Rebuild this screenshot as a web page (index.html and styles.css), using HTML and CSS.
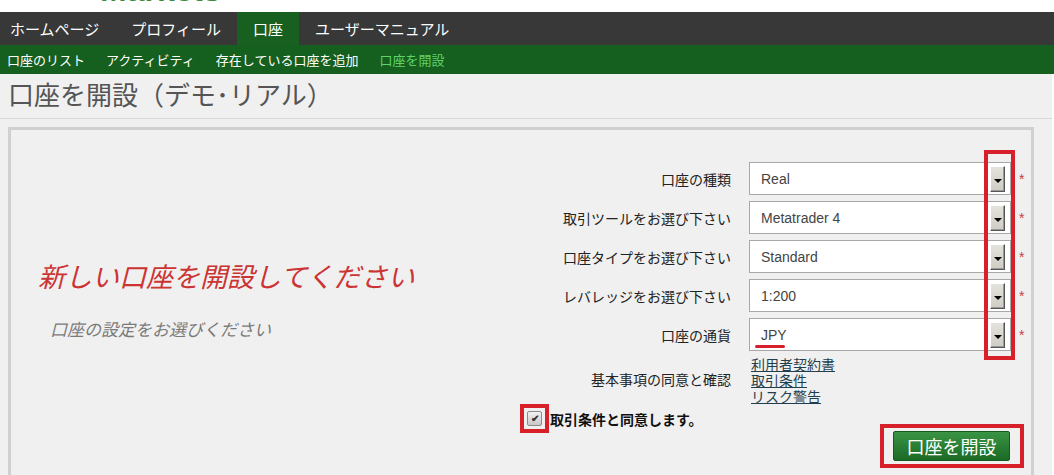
FILE: index.html
```html
<!DOCTYPE html>
<html lang="ja">

<head>
    <meta charset="UTF-8">
    <meta name="viewport" content="width=device-width, initial-scale=1.0">
    <title>口座を開設</title>
    <link rel="stylesheet" href="styles.css">
</head>

<body>

    <div class="top-bar">
        <span class="logo">Markets</span>
    </div>

    <nav class="main-nav">
        <a href="#">ホームページ</a>
        <a href="#">プロフィール</a>
        <a href="#" class="active">口座</a>
        <a href="#">ユーザーマニュアル</a>
    </nav>

    <nav class="sub-nav">
        <a href="#">口座のリスト</a>
        <a href="#">アクティビティ</a>
        <a href="#">存在している口座を追加</a>
        <a href="#" class="active">口座を開設</a>
    </nav>

    <div class="page">
        <h1 class="page-title">口座を開設（デモ･リアル）</h1>

        <div class="panel">
            <div class="intro">
                <h2>新しい口座を開設してください</h2>
                <p>口座の設定をお選びください</p>
            </div>

            <form class="account-form">
                <label class="form-label">口座の種類</label>
                <div class="field">
                    <div class="select"><span>Real</span><span class="drop"></span></div>
                    <span class="req">*</span>
                </div>

                <label class="form-label">取引ツールをお選び下さい</label>
                <div class="field">
                    <div class="select"><span>Metatrader 4</span><span class="drop"></span></div>
                    <span class="req">*</span>
                </div>

                <label class="form-label">口座タイプをお選び下さい</label>
                <div class="field">
                    <div class="select"><span>Standard</span><span class="drop"></span></div>
                    <span class="req">*</span>
                </div>

                <label class="form-label">レバレッジをお選び下さい</label>
                <div class="field">
                    <div class="select"><span>1:200</span><span class="drop"></span></div>
                    <span class="req">*</span>
                </div>

                <label class="form-label">口座の通貨</label>
                <div class="field">
                    <div class="select"><span class="underlined">JPY</span><span class="drop"></span></div>
                    <span class="req">*</span>
                </div>

                <label class="form-label label-top">基本事項の同意と確認</label>
                <div class="doc-links">
                    <a href="#">利用者契約書</a>
                    <a href="#">取引条件</a>
                    <a href="#">リスク警告</a>
                </div>

                <div class="agree">
                    <span class="checkbox-mark"><span class="checkbox">&#10004;</span></span>
                    <span>取引条件と同意します。</span>
                </div>

                <div class="submit-row">
                    <span class="submit-mark">
                        <button type="button" class="submit-button">口座を開設</button>
                    </span>
                </div>

                <!-- red marker round the dropdown buttons -->
                <div class="drops-mark"></div>
            </form>
        </div>
    </div>

</body>

</html>
```

FILE: styles.css
```css
body {
    margin: 0;
    padding: 0;
    background-color: #fff;
    font-family: 'Liberation Sans', 'Noto Sans CJK JP', sans-serif;
    color: #222;
}

a {
    text-decoration: none;
}

.top-bar {
    height: 12px;
    overflow: hidden;
    padding-left: 100px;
}

.logo {
    display: block;
    margin-top: -26px;
    font-size: 32px;
    line-height: 32px;
    font-weight: 700;
    color: #3b8a3e;
}

.main-nav {
    display: flex;
    height: 33px;
    background-color: #383838;
}

.main-nav a {
    display: flex;
    align-items: center;
    padding: 0 16px;
    font-size: 15px;
    color: #fff;
}

.main-nav a:first-child {
    padding-left: 10px;
}

.main-nav a.active {
    background-color: #17601f;
}

.sub-nav {
    display: flex;
    gap: 21px;
    height: 29px;
    padding-left: 7px;
    background-color: #16601f;
}

.sub-nav a {
    display: flex;
    align-items: center;
    font-size: 13px;
    color: #fff;
}

.sub-nav a.active {
    color: #5fd36a;
}

.page {
    background-color: #f0f0f0;
    min-height: 401px;
    margin-right: 2px;
}

.page-title {
    margin: 0;
    height: 44px;
    line-height: 44px;
    padding-left: 8px;
    font-size: 26px;
    font-weight: 400;
    color: #555;
    border-bottom: 1px solid #d8d8d8;
}

.panel {
    display: flex;
    width: 1020px;
    min-height: 320px;
    margin: 8px 0 0 8px;
    padding-top: 32px;
    border: 3px solid #d0d0d0;
    border-bottom: none;
    background-color: #f0f0f0;
}

.intro {
    width: 500px;
    padding-left: 27px;
    box-sizing: border-box;
}

.intro h2 {
    margin: 94px 0 0 0;
    font-size: 27px;
    font-weight: 400;
    font-style: italic;
    color: #cc3333;
}

.intro p {
    margin: 21px 0 0 12px;
    font-size: 17px;
    font-style: italic;
    color: #7a7a7a;
}

.account-form {
    position: relative;
    display: grid;
    grid-template-columns: 220px 282px;
    column-gap: 18px;
    row-gap: 6px;
    align-content: start;
}

.form-label {
    display: flex;
    align-items: center;
    justify-content: flex-end;
    font-size: 14px;
    color: #222;
}

.form-label.label-top {
    align-items: flex-start;
    padding-top: 12px;
}

.field {
    display: flex;
    align-items: center;
    gap: 8px;
}

.select {
    display: flex;
    align-items: center;
    justify-content: space-between;
    width: 262px;
    height: 33px;
    box-sizing: border-box;
    padding: 0 5px 0 11px;
    background-color: #fff;
    border: 1px solid #a8a8a8;
    font-size: 14px;
    color: #444;
}

.underlined {
    position: relative;
}

.underlined::after {
    content: '';
    position: absolute;
    left: -6px;
    bottom: -5px;
    width: 30px;
    height: 3px;
    border-radius: 2px;
    background-color: #d8202b;
}

.drop {
    position: relative;
    width: 15px;
    height: 26px;
    box-sizing: border-box;
    background: linear-gradient(#e4e2dc, #cfccc4);
    border: 1px solid;
    border-color: #fff #555 #555 #fff;
    box-shadow: inset -1px -1px #999;
}

.drop::after {
    content: '';
    position: absolute;
    left: 3px;
    top: 12px;
    border-left: 4px solid transparent;
    border-right: 4px solid transparent;
    border-top: 4px solid #000;
}

.req {
    font-size: 14px;
    color: #cc3b3b;
}

.doc-links {
    display: flex;
    flex-direction: column;
    padding-left: 2px;
}

.doc-links a {
    font-size: 14px;
    line-height: 16px;
    color: #1f3f4f;
    text-decoration: underline;
}

.agree {
    grid-column: 1;
    align-self: start;
    display: flex;
    align-items: center;
    gap: 1px;
    margin-top: -7px;
    padding-left: 9px;
    font-size: 14px;
    font-weight: 700;
    color: #111;
}

.checkbox-mark {
    display: flex;
    padding: 3px;
    border: 4px solid #d8202b;
}

.checkbox {
    display: flex;
    align-items: center;
    justify-content: center;
    width: 15px;
    height: 15px;
    box-sizing: border-box;
    border: 1px solid #8a8a8a;
    border-radius: 2px;
    background: linear-gradient(#f2f2f2, #c8c8c8);
    font-size: 10px;
    color: #333;
}

.submit-row {
    grid-column: 2;
    display: flex;
    justify-content: flex-end;
    margin-top: 13px;
    padding-right: 7px;
}

.submit-mark {
    display: flex;
    padding: 3px 10px 3px 9px;
    border: 4px solid #d8202b;
}

.submit-button {
    width: 117px;
    height: 30px;
    padding: 0;
    border: 1px solid #145a1c;
    border-radius: 2px;
    background: linear-gradient(#3a9444, #1b6a25);
    color: #fff;
    font-family: 'Liberation Sans', 'Noto Sans CJK JP', sans-serif;
    font-size: 18px;
}

.drops-mark {
    position: absolute;
    left: 473px;
    top: -12px;
    width: 31px;
    height: 210px;
    box-sizing: border-box;
    border: 4px solid #d8202b;
}
```
